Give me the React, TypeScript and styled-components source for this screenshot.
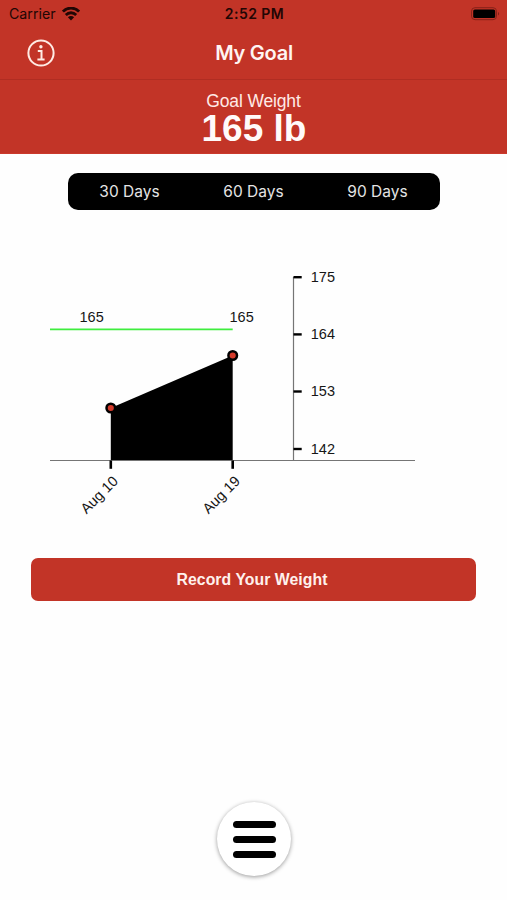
import React from "react";
import styled, { createGlobalStyle } from "styled-components";

const RED = "#c23427";

const GlobalStyle = createGlobalStyle`
  * { box-sizing: border-box; }
  body { margin: 0; background: #fefefe; }
`;

const Screen = styled.main`
  display: flex;
  flex-direction: column;
  align-items: center;
  width: 507px;
  height: 900px;
  overflow: hidden;
  background: #fefefe;
  font-family: "Liberation Sans", Arial, sans-serif;
`;

const StatusBar = styled.div`
  display: grid;
  grid-template-columns: 1fr auto 1fr;
  align-items: center;
  width: 100%;
  height: 27px;
  padding: 0 7px 0 9px;
  background: ${RED};
  color: #210604;
  font: 400 14.2px/27px Inter, sans-serif;
`;

const Carrier = styled.div`
  display: flex;
  align-items: center;
  gap: 6px;
`;

const Clock = styled.time`
  font-weight: 600;
  font-size: 14px;
  letter-spacing: 0.45px;
`;

const BatterySlot = styled.div`
  display: flex;
  justify-content: flex-end;
`;

const NavBar = styled.header`
  display: grid;
  grid-template-columns: 28px 1fr 28px;
  align-items: center;
  width: 100%;
  height: 53px;
  padding: 0 26px 0 27px;
  background: ${RED};
  border-bottom: 1px solid #b02d22;
`;

const IconButton = styled.button`
  display: flex;
  padding: 0;
  border: 0;
  background: none;
`;

const Title = styled.h1`
  margin: 0;
  text-align: center;
  color: #fff5f2;
  font: 600 20px/24px Inter, sans-serif;
  letter-spacing: -0.25px;
`;

const GoalBanner = styled.section`
  display: flex;
  flex-direction: column;
  align-items: center;
  width: 100%;
  height: 74px;
  padding-top: 11px;
  background: ${RED};
  border-bottom: 1px solid #cb3a2c;
`;

const GoalLabel = styled.span`
  color: #ffeae6;
  font-size: 17.5px;
  line-height: 20px;
  letter-spacing: -0.15px;
`;

const GoalValue = styled.strong`
  padding-left: 1px;
  color: #fffafa;
  font-size: 37px;
  line-height: 35px;
`;

const Segments = styled.div`
  display: grid;
  grid-template-columns: repeat(3, 1fr);
  width: 372px;
  height: 37px;
  margin-top: 19px;
  border-radius: 10px;
  background: #000;
`;

const Segment = styled.button`
  padding: 0;
  border: 0;
  background: none;
  color: #e4e4e4;
  font: 400 15.5px/37px Inter, sans-serif;
`;

const ChartArea = styled.section`
  width: 100%;
  height: 348px;
`;

const Chart = styled.svg`
  display: block;
`;

const ChartLabel = styled.text`
  fill: #161616;
  font: 14.5px "Liberation Sans", Arial, sans-serif;
`;

const RecordButton = styled.button`
  width: 445px;
  height: 43px;
  padding: 0 3px 0 0;
  border: 0;
  border-radius: 7px;
  background: ${RED};
  color: #fff1ed;
  font: 700 15.8px/43px "Liberation Sans", Arial, sans-serif;
  letter-spacing: 0.05px;
`;

const MenuButton = styled.button`
  display: flex;
  flex-direction: column;
  align-items: center;
  justify-content: center;
  gap: 8px;
  width: 74px;
  height: 74px;
  margin: 201px 0 0 1px;
  padding: 0;
  border: 0;
  border-radius: 50%;
  background: #fff;
  box-shadow: 0 1px 4px rgba(0, 0, 0, 0.4);
`;

const MenuLine = styled.span`
  width: 43px;
  height: 7px;
  border-radius: 4px;
  background: #000;
`;

const WifiIcon = () => (
  <svg width="18" height="14" viewBox="0 0 18 14" fill="none" stroke="#210604" strokeWidth="2.8">
    <path d="M.9 4.6c4.5-4.7 11.7-4.7 16.2 0" />
    <path d="M3.8 8c3-3 7.4-3 10.4 0" />
    <path d="M5.9 10.3c1.9-1.6 4.3-1.6 6.2 0L9 13.4Z" fill="#210604" stroke="none" />
  </svg>
);

const BatteryIcon = () => (
  <svg width="30" height="14" viewBox="0 0 30 14">
    <rect x="1.5" y=".7" width="25" height="12" rx="3.5" fill="none" stroke="#872219" />
    <rect x="3.2" y="2.4" width="22" height="8.7" rx="1.7" fill="#000" />
    <path d="M28 5v3.4c1.5-.6 1.5-2.8 0-3.4" fill="#872219" />
  </svg>
);

const InfoIcon = () => (
  <svg width="28" height="28" viewBox="0 0 28 28" fill="none" stroke="#ffebe4">
    <circle cx="14" cy="14" r="12.6" strokeWidth="2" />
    <circle cx="13.9" cy="7.7" r="1.7" fill="#ffebe4" stroke="none" />
    <path d="M10.8 12.1h3.7v8.2M10.4 20.5h7.2" strokeWidth="2" />
  </svg>
);

const ticks = [
  { value: 175, y: 67.2 },
  { value: 164, y: 124.4 },
  { value: 153, y: 181.5 },
  { value: 142, y: 239 },
];

const points = [
  { date: "Aug 10", x: 110.8, y: 198, labelX: 79.5 },
  { date: "Aug 19", x: 232.7, y: 145.5, labelX: 229.5 },
];

const WeightChart = () => (
  <Chart width="507" height="348" viewBox="0 0 507 348">
    <path d="M50 119.3H232.7" stroke="#3fed3f" strokeWidth="1.8" />
    <path d="M110.8 198L232.7 145.5V250.5H110.8Z" fill="#000" />
    <path d="M50 250.5H415M293.5 67V250" fill="none" stroke="#757575" strokeWidth="1.2" />
    {ticks.map((tick) => (
      <g key={tick.value}>
        <path d={`M293.5 ${tick.y}h8.2`} stroke="#000" strokeWidth="2.4" />
        <ChartLabel x="310.8" y={tick.y + 4.9}>{tick.value}</ChartLabel>
      </g>
    ))}
    {points.map((point) => (
      <g key={point.date}>
        <path d={`M${point.x} 250.5v8.3`} stroke="#000" strokeWidth="2.6" />
        <circle cx={point.x} cy={point.y} r="4.3" fill="#d33a2a" stroke="#000" strokeWidth="2.5" />
        <ChartLabel x={point.labelX} y="112.3">165</ChartLabel>
        <ChartLabel textAnchor="end" transform={`translate(${point.x + 8.2} 272) rotate(-45)`}>
          {point.date}
        </ChartLabel>
      </g>
    ))}
  </Chart>
);

export default function App() {
  return (
    <>
      <GlobalStyle />
      <Screen>
        <StatusBar>
          <Carrier>Carrier <WifiIcon /></Carrier>
          <Clock>2:52 PM</Clock>
          <BatterySlot><BatteryIcon /></BatterySlot>
        </StatusBar>
        <NavBar>
          <IconButton aria-label="Information"><InfoIcon /></IconButton>
          <Title>My Goal</Title>
        </NavBar>
        <GoalBanner>
          <GoalLabel>Goal Weight</GoalLabel>
          <GoalValue>165 lb</GoalValue>
        </GoalBanner>
        <Segments>
          <Segment>30 Days</Segment>
          <Segment>60 Days</Segment>
          <Segment>90 Days</Segment>
        </Segments>
        <ChartArea><WeightChart /></ChartArea>
        <RecordButton>Record Your Weight</RecordButton>
        <MenuButton aria-label="Menu">
          <MenuLine />
          <MenuLine />
          <MenuLine />
        </MenuButton>
      </Screen>
    </>
  );
}
